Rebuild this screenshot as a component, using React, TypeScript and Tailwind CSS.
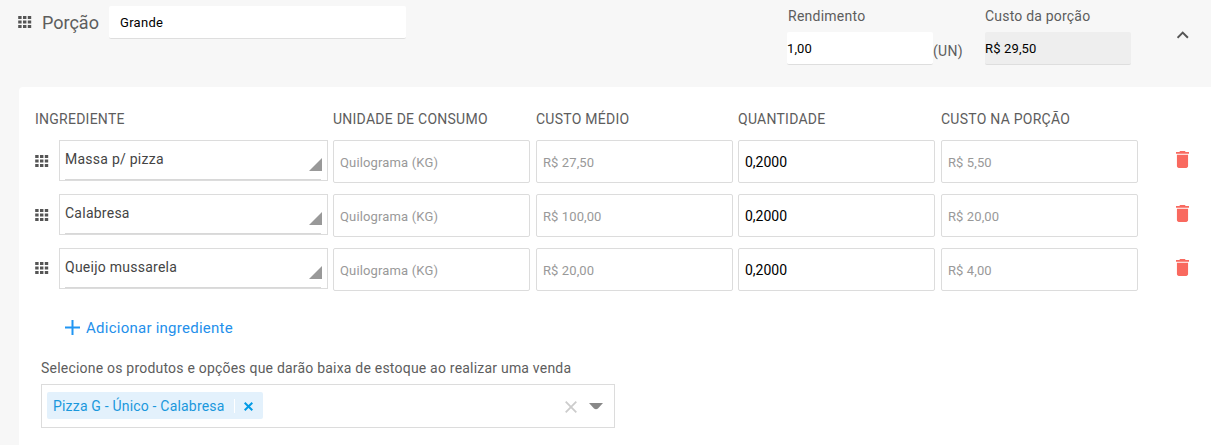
const ingredients = [
  { name: 'Massa p/ pizza', average: 'R$ 27,50', amount: '0,2000', cost: 'R$ 5,50' },
  { name: 'Calabresa', average: 'R$ 100,00', amount: '0,2000', cost: 'R$ 20,00' },
  { name: 'Queijo mussarela', average: 'R$ 20,00', amount: '0,2000', cost: 'R$ 4,00' },
];

function DragHandle() {
  return (
    <svg width="14" height="12" viewBox="0 0 14 12" className="shrink-0 fill-[#555]">
      {[0.2, 5, 9.8].map((x) =>
        [0, 4.5, 9].map((y) => <rect key={`${x}-${y}`} x={x} y={y} width="3.400" height="3" />),
      )}
    </svg>
  );
}

function Trash() {
  return (
    <svg width="13" height="17" viewBox="5 3 14 18" preserveAspectRatio="none" className="fill-[#f9695f]">
      <path d="M6 19c0 1.1.9 2 2 2h8c1.1 0 2-.9 2-2V7H6v12zM19 4h-3.500l-1-1h-5l-1 1H5v2h14V4z" />
    </svg>
  );
}

function Box({ children, className = '' }: { children: string; className?: string }) {
  return (
    <div className="flex h-[43px] w-[197px] items-center rounded-xs border border-[#dcdcdc] bg-white px-[6px] pt-[2px]">
      <span className={className}>{children}</span>
    </div>
  );
}

const columns = 'grid grid-cols-[19px_269px_198px_197px_198px_197px_1fr] gap-x-[5px]';

export default function App() {
  return (
    <div className="h-[445px] w-[1211px] overflow-hidden bg-[#f7f7f7] font-[Roboto,sans-serif] text-[#5d5d5d]">
      <header className="flex h-[87px] items-start pl-[18px]">
        <div className="mt-4">
          <DragHandle />
        </div>
        <h1 className="mt-[9px] ml-[10px] w-[67px] text-[18px] leading-[27px] font-normal">Porção</h1>
        <div className="mt-[6px] flex h-[33px] w-[297px] items-center rounded-xs border-b border-[#dedede] bg-white pt-px pl-[11px] text-[13px] tracking-[0.3px] text-black">
          Grande
        </div>
        <div className="mt-[6px] ml-[381px] w-[198px]">
          <div className="pl-px text-[14px] leading-5 tracking-[0.25px]">Rendimento</div>
          <div className="mt-[6px] flex">
            <div className="flex h-[33px] w-[146px] items-center rounded-xs border-b border-[#dedede] bg-white pt-px text-[13px] tracking-[0.1px] text-black">
              1,00
            </div>
            <span className="mt-[9px] text-[14px] leading-5 tracking-[0.3px]">(UN)</span>
          </div>
        </div>
        <div className="mt-[6px] w-[146px]">
          <div className="text-[14px] leading-5 tracking-[0.2px]">Custo da porção</div>
          <div className="mt-[6px] flex h-[33px] items-center rounded-xs border-b border-[#dedede] bg-[#eee] pt-px text-[13px] tracking-[0.15px] text-black">
            R$ 29,50
          </div>
        </div>
        <svg width="12" height="8" viewBox="0 0 12 8" className="mt-[31px] ml-[46px] fill-none stroke-[#555]" strokeWidth="2">
          <path d="M0.500 6.800 5.700 1.600 10.900 6.800" />
        </svg>
      </header>

      <main className="ml-[19px] h-[358px] rounded-tl-sm bg-white pt-[22px] pl-4">
        <div className="grid grid-cols-[298px_203px_202px_203px_1fr] text-[14px] leading-5 tracking-[0.25px]">
          <span>INGREDIENTE</span>
          <span>UNIDADE DE CONSUMO</span>
          <span>CUSTO MÉDIO</span>
          <span>QUANTIDADE</span>
          <span>CUSTO NA PORÇÃO</span>
        </div>

        <div className="mt-[11px] flex flex-col gap-[11px]">
          {ingredients.map((item) => (
            <div key={item.name} className={`${columns} group h-[43px] items-start`}>
              <div className="mt-[15px] group-last:mt-[14px]">
                <DragHandle />
              </div>
              <div className="flex h-[41px] w-[269px] flex-col border border-[#dcdcdc] pr-[6px] pl-[5px]">
                <div className="flex h-[39px] justify-between border-b border-[#d8d8d8] text-[14px] tracking-[0.25px] text-[#444]">
                  <span className="mt-[8px] leading-5">{item.name}</span>
                  <svg width="13" height="13" viewBox="0 0 13 13" className="-mr-px mt-[17px] fill-[#999]">
                    <path d="M13 0V13H0Z" />
                  </svg>
                </div>
              </div>
              <Box className="text-[13px] tracking-[0.15px] text-[#999]">Quilograma (KG)</Box>
              <Box className="text-[13px] tracking-[0.1px] text-[#999]">{item.average}</Box>
              <Box className="text-[14px] text-black">{item.amount}</Box>
              <Box className="text-[13px] tracking-[0.1px] text-[#999]">{item.cost}</Box>
              <div className="mt-[11px] ml-[33px]">
                <Trash />
              </div>
            </div>
          ))}
        </div>

        <button className="mt-[26px] ml-[30px] flex h-5 items-center gap-[6px] text-[15px] tracking-[0.25px] text-[#2490eb]">
          <svg width="15" height="15" viewBox="0 0 15 15" className="fill-none stroke-[#2196f3]" strokeWidth="2">
            <path d="M7.500 0V15M0 7.500H15" />
          </svg>
          <span className="mt-[2px]">Adicionar ingrediente</span>
        </button>

        <p className="mt-[21px] ml-[6px] text-[14px] leading-5 tracking-[0.21px]">
          Selecione os produtos e opções que darão baixa de estoque ao realizar uma venda
        </p>
        <div className="mt-[6px] ml-[6px] flex h-11 w-[574px] items-center border border-[#dcdcdc] pr-[11px] pl-[5px]">
          <div className="-mt-px flex h-[27px] w-[216px] items-center rounded-xs bg-[#e3f1fc] pl-[6px] text-[14px] tracking-[0.19px] text-[#1a98dc]">
            <span className="mt-px w-[181px] whitespace-nowrap">Pizza G - Único - Calabresa</span>
            <span className="h-[14px] w-px bg-white" />
            <svg width="9" height="9" viewBox="0 0 9 9" className="mt-px ml-[9px] fill-none stroke-[#039be5]" strokeWidth="2">
              <path d="M0.700 0.700 8.300 8.300M8.300 0.700 0.700 8.300" />
            </svg>
          </div>
          <svg width="12" height="12" viewBox="0 0 12 12" className="mt-px ml-auto fill-none stroke-[#ccc]" strokeWidth="1.800">
            <path d="M0.700 0.700 11.300 11.300M11.300 0.700 0.700 11.300" />
          </svg>
          <svg width="14" height="7" viewBox="0 0 14 7" className="mt-px ml-3 fill-[#888]">
            <path d="M0 0H14L9 5.500Q7 7 5 5.500Z" />
          </svg>
        </div>
      </main>
    </div>
  );
}
